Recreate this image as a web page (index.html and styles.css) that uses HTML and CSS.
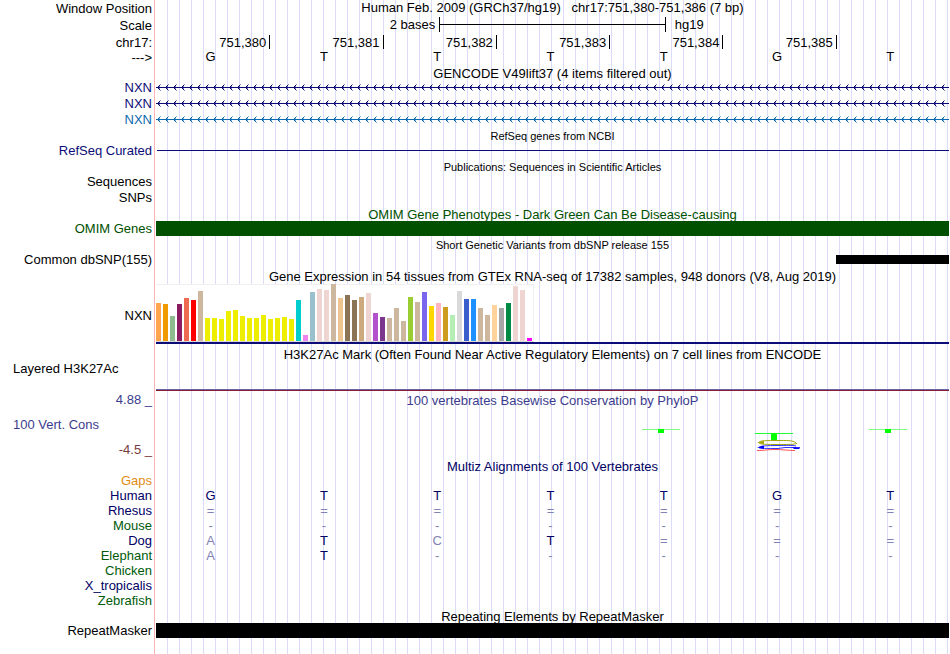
FILE: index.html
```html
<!DOCTYPE html>
<html lang="en">
<head>
<meta charset="utf-8">
<title>Genome Browser chr17:751,380-751,386</title>
<link rel="stylesheet" href="styles.css">
</head>
<body>
<main class="browser">
  <section class="ruler">
    <div class="row"><span class="label">Window Position</span><h1 class="position">Human Feb. 2009 (GRCh37/hg19) &nbsp; chr17:751,380-751,386 (7 bp)</h1></div>
    <div class="row"><span class="label">Scale</span>
      <div class="scale"><span class="scale-size">2 bases</span><span class="scale-bar"></span><span class="scale-db">hg19</span></div>
    </div>
    <div class="row ticks-row"><span class="label">chr17:</span>
      <div class="bases ticks"><span>751,380</span><span>751,381</span><span>751,382</span><span>751,383</span><span>751,384</span><span>751,385</span></div>
    </div>
    <div class="row"><span class="label">---&gt;</span>
      <div class="bases letters"><span>G</span><span>T</span><span>T</span><span>T</span><span>T</span><span>G</span><span>T</span></div>
    </div>
  </section>

  <section class="track">
    <h2>GENCODE V49lift37 (4 items filtered out)</h2>
    <svg class="defs" width="0" height="0" aria-hidden="true">
      <defs>
        <pattern id="strand" width="8" height="16" patternUnits="userSpaceOnUse"><path d="M0 7h8v1H0zM2 6h1v3H2zM3 5h1v1H3zM3 9h1v1H3z" fill="#0c0c78"/><path d="M4 4h1v1H4zM4 10h1v1H4zM3 6h1v1H3zM3 8h1v1H3z" fill="#0c0c78" fill-opacity=".5"/></pattern>
        <pattern id="strand-light" width="8" height="16" patternUnits="userSpaceOnUse"><path d="M0 7h8v1H0zM2 6h1v3H2zM3 5h1v1H3zM3 9h1v1H3z" fill="#0c6aae"/><path d="M4 4h1v1H4zM4 10h1v1H4zM3 6h1v1H3zM3 8h1v1H3z" fill="#0c6aae" fill-opacity=".5"/></pattern>
      </defs>
    </svg>
    <div class="row item navy"><span class="label">NXN</span><svg class="gene"><rect width="100%" height="16" fill="url(#strand)"/></svg></div>
    <div class="row item navy"><span class="label">NXN</span><svg class="gene"><rect width="100%" height="16" fill="url(#strand)"/></svg></div>
    <div class="row item sky"><span class="label">NXN</span><svg class="gene"><rect width="100%" height="16" fill="url(#strand-light)"/></svg></div>
  </section>

  <section class="track">
    <h2 class="small">RefSeq genes from NCBI</h2>
    <div class="row item navy"><span class="label">RefSeq Curated</span><span class="intron"></span></div>
  </section>

  <section class="track">
    <h2 class="small">Publications: Sequences in Scientific Articles</h2>
    <div class="row item"><span class="label">Sequences</span></div>
    <div class="row item"><span class="label">SNPs</span></div>
  </section>

  <section class="track">
    <h2 class="green">OMIM Gene Phenotypes - Dark Green Can Be Disease-causing</h2>
    <div class="row item green"><span class="label">OMIM Genes</span><span class="block"></span></div>
  </section>

  <section class="track">
    <h2 class="small">Short Genetic Variants from dbSNP release 155</h2>
    <div class="row item"><span class="label">Common dbSNP(155)</span><div class="bases"><span class="snp"></span></div></div>
  </section>

  <section class="track">
    <h2>Gene Expression in 54 tissues from GTEx RNA-seq of 17382 samples, 948 donors (V8, Aug 2019)</h2>
    <div class="row gtex"><span class="label">NXN</span><div class="gtex-body"><div class="chart" id="chart"></div></div></div>
  </section>

  <section class="track">
    <h2>H3K27Ac Mark (Often Found Near Active Regulatory Elements) on 7 cell lines from ENCODE</h2>
    <div class="row h3k"><span class="label left">Layered H3K27Ac</span><span class="signal"></span></div>
  </section>

  <section class="track row cons">
    <div class="axis"><span class="label">4.88 _</span><span class="label left">100 Vert. Cons</span><span class="label low">-4.5 _</span></div>
    <div>
      <h2 class="inner">100 vertebrates Basewise Conservation by PhyloP</h2>
      <div class="bases logos">
        <svg class="logo fifth" viewBox="0 0 46 30" width="46" height="30"><path d="M0 0h38v1H0z" fill="#7dff7d"/><path d="M16 0h6v4h-6z" fill="#0f0"/></svg>
        <svg class="logo" viewBox="0 0 46 30" width="46" height="30"><path d="M0 4h38v1H0z" fill="#1fff2f"/><path d="M16 4h6v7h-6z" fill="#0f0"/>
          <path d="M41 14C38 11 31 11.500 23 11.500C12 11.500 4 11.500 4 13.500C4 15.500 12 15.500 23 15.500C34 15.500 38 15.500 42 14.500" fill="none" stroke="#a5a50a"/><path d="M2 13.500L9 11.800V15.200Z" fill="#a5a50a"/>
          <path d="M41 17C38 16 31 16.500 23 16.500C12 16.500 4 17 4 18.500C4 19.500 12 19.500 23 19.500L30 18.500H45" fill="none" stroke="#3434ff"/><path d="M2 18.500L9 16.500V20Z" fill="#00f"/><path d="M37 18l8 1-1 1h-5z" fill="#00f"/>
          <path d="M2 21.500C10 21.500 12 20.500 20 20.500S32 21.500 40 21.500" fill="none" stroke="#ff5252"/>
        </svg>
        <svg class="logo" viewBox="0 0 46 30" width="46" height="30"><path d="M0 0h38v1H0z" fill="#7dff7d"/><path d="M16 0h6v4h-6z" fill="#0f0"/></svg>
      </div>
    </div>
  </section>

  <section class="track">
    <h2 class="multiz">Multiz Alignments of 100 Vertebrates</h2>
    <table class="alignment">
      <tbody>
        <tr class="gaps"><th scope="row">Gaps</th><td></td><td></td><td></td><td></td><td></td><td></td><td></td></tr>
        <tr class="blue"><th scope="row">Human</th><td>G</td><td>T</td><td>T</td><td>T</td><td>T</td><td>G</td><td>T</td></tr>
        <tr class="blue"><th scope="row">Rhesus</th><td class="dim">=</td><td class="dim">=</td><td class="dim">=</td><td class="dim">=</td><td class="dim">=</td><td class="dim">=</td><td class="dim">=</td></tr>
        <tr class="leaf"><th scope="row">Mouse</th><td class="dim">-</td><td class="dim">-</td><td class="dim">-</td><td class="dim">-</td><td class="dim">-</td><td class="dim">-</td><td class="dim">-</td></tr>
        <tr class="blue"><th scope="row">Dog</th><td class="dim">A</td><td>T</td><td class="dim">C</td><td>T</td><td class="dim">=</td><td class="dim">=</td><td class="dim">=</td></tr>
        <tr class="leaf"><th scope="row">Elephant</th><td class="dim">A</td><td>T</td><td class="dim">-</td><td class="dim">-</td><td class="dim">-</td><td class="dim">-</td><td class="dim">-</td></tr>
        <tr class="leaf"><th scope="row">Chicken</th><td></td><td></td><td></td><td></td><td></td><td></td><td></td></tr>
        <tr class="blue"><th scope="row">X_tropicalis</th><td></td><td></td><td></td><td></td><td></td><td></td><td></td></tr>
        <tr class="leaf"><th scope="row">Zebrafish</th><td></td><td></td><td></td><td></td><td></td><td></td><td></td></tr>
      </tbody>
    </table>
  </section>

  <section class="track">
    <h2>Repeating Elements by RepeatMasker</h2>
    <div class="row item"><span class="label">RepeatMasker</span><span class="block"></span></div>
  </section>
</main>
<script src="chart.js"></script>
</body>
</html>
```
FILE: styles.css
```css
* { box-sizing: border-box; }

body {
  margin: 0;
  background: #fff;
  color: #000;
  font: 13px/15px "Liberation Sans", Arial, sans-serif;
}

/* Left edge line and vertical guide lines run behind every track */
.browser {
  min-height: 100vh;
  padding-right: 1px;
  background:
    linear-gradient(#ffb4b4, #ffb4b4) 154px 0 / 1px 100% no-repeat,
    repeating-linear-gradient(to right, transparent 0 11px, #dcdcfa 11px 12px) 156px 0 no-repeat;
}

.row { display: grid; grid-template-columns: 156px minmax(0, 1fr); }

.label { padding-right: 4px; text-align: right; white-space: nowrap; }
.label.left { padding-left: 13px; text-align: left; }

h1, h2 { margin: 0; font-size: 13px; font-weight: normal; text-align: center; white-space: nowrap; }
h2 { height: 15px; margin-left: 156px; line-height: 17px; }
h2.small { font-size: 11px; }
h2.inner { margin-left: 0; color: #3c3c8c; }
h2.multiz { color: #000064; }

/* Ruler */
.ruler { height: 65px; }
.ruler .row { height: 17px; }
.ruler .ticks-row { height: 15px; }
.ruler .label { line-height: 17px; }
.position { line-height: 15px; }
.scale { display: grid; grid-template-columns: 5fr 4fr 5fr; }
.scale-size { padding-right: 4px; text-align: right; }
.scale-db { padding-left: 9px; }
.scale-bar {
  height: 15px;
  border: solid #000;
  border-width: 0 1px;
  background: linear-gradient(#000, #000) 0 7px / 100% 1px no-repeat;
}

.bases { display: grid; grid-template-columns: repeat(7, minmax(0, 1fr)); }
.ticks span { height: 14px; margin: 1px -1px 0 0; padding-right: 3px; border-right: 1px solid #000; text-align: right; }
.letters span { padding-right: 4px; text-align: center; }

/* Feature rows */
.item { height: 16px; }
.navy { color: #0c0c78; }
.sky { color: #0c6aae; }
.green { color: #005000; }
.defs { display: block; height: 0; }
.gene { display: block; width: 100%; height: 16px; }
.intron { height: 1px; margin: 7px 0 0 1px; background: currentColor; }
.block { height: 15px; background: currentColor; }
.snp { grid-column: 7; height: 9px; margin-top: 3px; background: #000; }

/* Expression chart */
.gtex { height: 63px; }
.gtex .label { padding-top: 25px; }
.gtex-body { height: 61px; padding-top: 1px; border-bottom: 2px solid #0c0c78; }
.chart {
  display: inline-flex;
  align-items: flex-end;
  gap: 2px;
  height: 58px;
  padding-right: 1px;
  border: solid #f0f0f0;
  border-width: 1px 1px 1px 0;
  border-bottom-color: #d8d8d8;
  background: #fff;
}
.bar { width: 5px; }

/* Signal tracks */
.h3k { height: 31px; }
.signal { height: 2px; margin-top: 28px; border-top: 1px solid #6e64aa; background: #821e32; }
.cons { height: 66px; }
.axis { display: grid; grid-template-rows: 25px 25px 16px; color: #3c3c8c; }
.low { color: #783c3c; }
.logos { padding-top: 22px; }
.logo { margin-left: 33px; }
.fifth { grid-column: 5; }

/* Alignment */
.alignment { width: 100%; table-layout: fixed; border-collapse: collapse; }
.alignment th { width: 156px; padding: 0 4px 0 0; font-weight: normal; text-align: right; }
.alignment td { padding: 0 4px 0 0; color: #000064; text-align: center; }
.alignment tr { height: 15px; }
.gaps { color: #e18c14; }
.blue { color: #000064; }
.leaf { color: #005a0a; }
.alignment .dim { color: #8282b4; }
```
FILE: chart.js
```js
// Tissue colour and bar height in pixels, in display order
const tissues = [
  ["#ffa54f", 38], ["#ee9a00", 37], ["#8fbc8f", 25], ["#8b1c62", 37], ["#ee6a50", 43], ["#ff0000", 41],
  ["#cdb79e", 50], ["#eeee00", 23], ["#eeee00", 23], ["#eeee00", 22], ["#eeee00", 30], ["#eeee00", 31],
  ["#eeee00", 25], ["#eeee00", 23], ["#eeee00", 23], ["#eeee00", 26], ["#eeee00", 22], ["#eeee00", 23],
  ["#eeee00", 24], ["#eeee00", 22], ["#00cdcd", 41], ["#ee82ee", 6], ["#9ac0cd", 49], ["#eed5d2", 52],
  ["#eed5d2", 51], ["#cdb79e", 57], ["#eec591", 43], ["#8b7355", 46], ["#8b7355", 41], ["#cdaa7d", 44],
  ["#eed5d2", 48], ["#b452cd", 28], ["#7a378b", 24], ["#cdb79e", 23], ["#cdb79e", 33], ["#cdb79e", 20],
  ["#9acd32", 44], ["#cdb79e", 39], ["#7a67ee", 49], ["#ffd700", 35], ["#ffb6c1", 38], ["#cd9b1d", 34],
  ["#b4eeb4", 26], ["#d9d9d9", 50], ["#3a5fcd", 42], ["#1e90ff", 42], ["#cdb79e", 33], ["#cdb79e", 26],
  ["#ffd39b", 36], ["#a6a6a6", 33], ["#008b45", 38], ["#eed5d2", 55], ["#eed5d2", 51], ["#ff00ff", 3]
];
const chart = document.getElementById("chart");
for (const [color, height] of tissues) {
  const bar = document.createElement("span");
  bar.className = "bar";
  bar.style.background = color;
  bar.style.height = height + "px";
  chart.append(bar);
}
```
